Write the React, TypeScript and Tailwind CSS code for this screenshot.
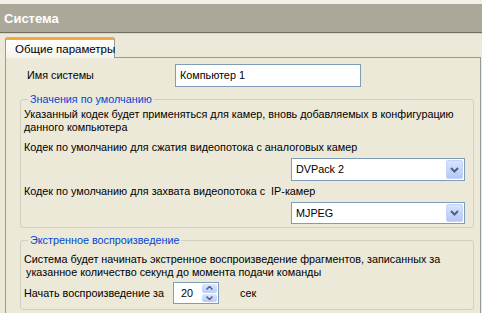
const font = { fontFamily: '"Liberation Sans", Arial, sans-serif' };

function ComboBox({ value, className }: { value: string; className: string }) {
  return (
    <div className={`flex items-stretch bg-white border border-[#7f9db9] p-px ${className}`}>
      <span className="flex-1 flex items-center pl-[3px] text-black">{value}</span>
      <span className="w-[17px] flex items-center justify-center bg-gradient-to-b from-[#d9e4fc] to-[#b3c8f5] rounded-[2px] border border-[#c3d3fd]">
        <svg width="9" height="6" viewBox="0 0 9 6">
          <path d="M1 1 L4.5 4.5 L8 1" fill="none" stroke="#4d6185" strokeWidth="2" />
        </svg>
      </span>
    </div>
  );
}

function SpinBox({ value }: { value: string }) {
  return (
    <div className="flex items-stretch w-[46px] h-[22px] bg-white border border-[#7f9db9] p-px">
      <span className="flex-1 flex items-center pl-[6px]">{value}</span>
      <span className="w-[15px] flex flex-col gap-px">
        <span className="flex-1 flex items-center justify-center bg-gradient-to-b from-[#dde6fc] to-[#b9cdf8] rounded-[2px]">
          <svg width="7" height="4" viewBox="0 0 7 4"><path d="M0.5 3.5 L3.5 0.5 L6.5 3.5" fill="none" stroke="#4d6185" strokeWidth="1.5" /></svg>
        </span>
        <span className="flex-1 flex items-center justify-center bg-gradient-to-b from-[#dde6fc] to-[#b9cdf8] rounded-[2px]">
          <svg width="7" height="4" viewBox="0 0 7 4"><path d="M0.5 0.5 L3.5 3.5 L6.5 0.5" fill="none" stroke="#4d6185" strokeWidth="1.5" /></svg>
        </span>
      </span>
    </div>
  );
}

export default function App() {
  return (
    <div className="w-[482px] h-[313px] overflow-hidden bg-[#ece9d8] text-[10.8px] leading-[13px] text-black whitespace-nowrap" style={font}>
      <div className="h-[4px] bg-[#f1efe6]" />

      {/* Title bar */}
      <div className="h-[28px] bg-[#aca899] flex items-center pl-[4px] text-white font-bold text-[13px]">
        Система
      </div>
      <div className="h-px bg-[#716f64]" />
      <div className="h-px bg-[#d8d5c6]" />

      {/* Tabs */}
      <div className="h-[23px] flex items-end pl-[5px]">
        <div className="relative z-10 -mb-px w-[110px] h-[21px] border-x border-[#919b9c] border-t-[3px] border-t-[#f5a83c] bg-gradient-to-b from-[#ffffff] to-[#f4f3ee] flex items-center pl-[9px] rounded-t-[2px] text-[11.5px]">
          Общие параметры
        </div>
      </div>

      {/* Tab panel */}
      <div className="ml-[5px] mr-px h-[260px] border-l border-t border-r border-[#919b9c] bg-[#ece9d8]">
        <div className="flex items-center pt-[6px] pl-[21px]">
          <span className="w-[148px]">Имя системы</span>
          <div className="w-[186px] h-[23px] bg-white border border-[#7f9db9] flex items-center pl-[4px]">Компьютер 1</div>
        </div>

        <fieldset className="ml-[14px] mt-[6px] w-[454px] border border-[#d0d0bf] rounded-[3px] pl-[3px] pr-[3px] pt-[2px] pb-[3px]">
          <legend className="ml-[4px] px-[2px] text-[#0046d5]">Значения по умолчанию</legend>
          <div>Указанный кодек будет применяться для камер, вновь добавляемых в конфигурацию</div>
          <div>данного компьютера</div>
          <div className="mt-[7px]">Кодек по умолчанию для сжатия видеопотока с аналоговых камер</div>
          <ComboBox value="DVPack 2" className="ml-[267px] mt-[4px] w-[174px] h-[23px]" />
          <div className="mt-[4px]">Кодек по умолчанию для захвата видеопотока с&nbsp; IP-камер</div>
          <ComboBox value="MJPEG" className="ml-[267px] mt-[4px] w-[174px] h-[22px]" />
        </fieldset>

        <fieldset className="ml-[14px] mt-[6px] w-[454px] border border-[#d0d0bf] rounded-[3px] pl-[3px] pr-[3px] pt-[6px] pb-[5px]">
          <legend className="ml-[4px] px-[2px] text-[#0046d5]">Экстренное воспроизведение</legend>
          <div>Система будет начинать экстренное воспроизведение фрагментов, записанных за</div>
          <div className="pl-[2px]">указанное количество секунд до момента подачи команды</div>
          <div className="flex items-center mt-[3px]">
            <span className="w-[149px]">Начать воспроизведение за</span>
            <SpinBox value="20" />
            <span className="ml-[21px]">сек</span>
          </div>
        </fieldset>
      </div>
    </div>
  );
}
